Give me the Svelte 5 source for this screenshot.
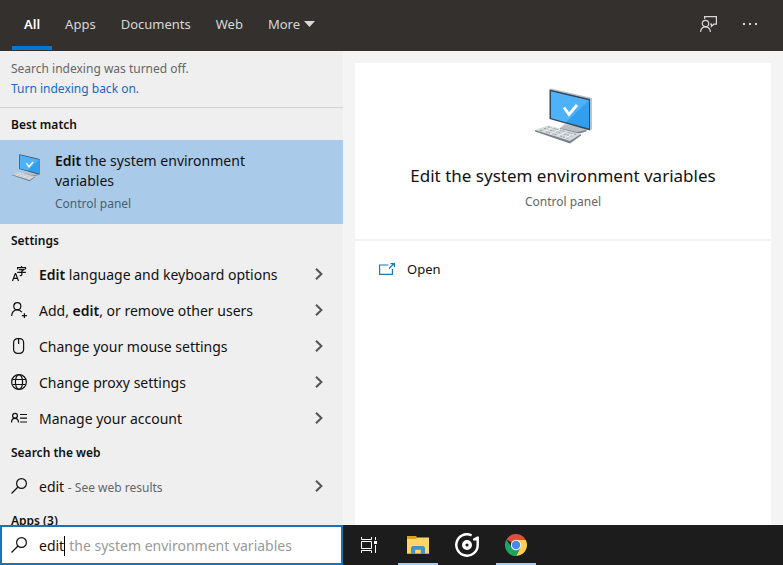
<script>
  const tabs = ['All', 'Apps', 'Documents', 'Web'];
  let active = $state('All');
  let query = $state('edit');

  const settings = [
    { icon: 'language', parts: [['Edit', true], [' language and keyboard options', false]] },
    { icon: 'user', parts: [['Add, ', false], ['edit', true], [', or remove other users', false]] },
    { icon: 'mouse', parts: [['Change your mouse settings', false]] },
    { icon: 'globe', parts: [['Change proxy settings', false]] },
    { icon: 'account', parts: [['Manage your account', false]] }
  ];
</script>

{#snippet computer(size)}
  <svg width={size} height={size} viewBox="0 0 60 60" aria-hidden="true">
    <path d="M27 41l5-4 12 2.500V35l4 1v4.500l6 1.500-1 2.500-9 2z" fill="#b9bfc4" />
    <path d="M27 41l17 4 9.500-2v1.500l-9.500 2.500-17-4.500z" fill="#7d868c" />
    <path d="M16.500 2.500l2-1L59 11v31.500l-2 1z" fill="#bcc3c8" />
    <path d="M16.500 2.500L57 12v31.500L16.500 32z" fill="#34495a" />
    <path d="M18 4.500L56 13.500v28L18 31z" fill="#319ff0" />
    <path d="M18 4.500L56 13.500 33 35.200 18 31z" fill="#4fb2f9" />
    <path d="M31 20.500l5 7L44 18" fill="none" stroke="#fff" stroke-width="2.800" />
    <path d="M2 43l13-4.500 33 8.500-11 8z" fill="#d3d8db" />
    <path d="M2 43l35 11 11-7v1.500L37 56.500 2 44.500z" fill="#77818a" />
    <path d="M7 43l29 8.700M11 41.400l29 8M15 40l28 7.500" fill="none" stroke="#98a1a7" stroke-width="1" stroke-dasharray="2 1" />
    <path d="M10 45l10-4.500M17 47l10-4.500M24 49l10-4.500M31 51.500l9-4.500" stroke="#f1f3f4" stroke-width="1" />
  </svg>
{/snippet}

{#snippet magnifier()}
  <svg width="16" height="16" viewBox="0 0 16 16" class="line" aria-hidden="true">
    <circle cx="10.500" cy="5.500" r="4.900" />
    <path d="M7 9L.5 15.500" />
  </svg>
{/snippet}

{#snippet chevron()}
  <svg width="8" height="12" viewBox="0 0 8 12" aria-hidden="true">
    <path d="M1 .8L6.400 6 1 11.200" fill="none" stroke="#555" stroke-width="2" />
  </svg>
{/snippet}

{#snippet glyph(name)}
  <svg width="16" height="16" viewBox="0 0 16 16" class="line" aria-hidden="true">
    {#if name === 'language'}
      <path d="M1.500 15L4.300 7.500h.4L7.500 15M2.600 12.400h3.900" />
      <path d="M10.500 0v1.600M6.600 3.600V1.700h7.900v1.900M8 3.600h4.800l-2 1.700v3.500q0 1-2 .8M6.200 6.400h8.600" />
    {:else if name === 'user'}
      <circle cx="6.300" cy="4.200" r="3.500" />
      <path d="M.6 14C.9 10 3 7.800 6.300 7.800c2 0 3.500.9 4.500 2.400M13.400 11.200v5M10.900 13.700h5" />
    {:else if name === 'mouse'}
      <rect x="2.600" y=".6" width="10" height="14.800" rx="4" />
      <path d="M7.600.6V6" />
    {:else if name === 'globe'}
      <circle cx="8" cy="8" r="7.400" />
      <ellipse cx="8" cy="8" rx="3.600" ry="7.400" />
      <path d="M1.400 5.500h13.200M1.400 10.500h13.200" />
    {:else}
      <circle cx="4" cy="5.800" r="2.400" />
      <path d="M.5 12.500c0-2.600 1.300-4.200 3.500-4.200s3.500 1.600 3.500 4.200M9 4.500h7M9 8.200h7M9 12h7" />
    {/if}
  </svg>
{/snippet}

<div class="screen">
  <header>
    <nav aria-label="Search filters">
      {#each tabs as tab}
        <button class="tab" class:active={active === tab} onclick={() => (active = tab)}>{tab}</button>
      {/each}
      <button class="tab more">
        More
        <svg width="11" height="6" viewBox="0 0 11 6" aria-hidden="true"><path d="M0 0h11L5.500 6z" fill="currentColor" /></svg>
      </button>
    </nav>
    <div class="tools">
      <button aria-label="Feedback">
        <svg width="17" height="17" viewBox="0 0 17 17" fill="none" stroke="currentColor" stroke-width="1.200" aria-hidden="true">
          <circle cx="5.500" cy="7.500" r="3.200" />
          <path d="M.6 16c.2-3.200 2-5.200 4.900-5.200s4.700 2 4.900 5.200M4.600 3V.6h11.800v7.600h-2.600l-2.400 2.200V8.200h-1.200" />
        </svg>
      </button>
      <button aria-label="Options">
        <svg width="16" height="4" viewBox="0 0 16 4" fill="currentColor" aria-hidden="true"><path d="M1 1h2v2H1zM7 1h2v2H7zM13 1h2v2h-2z" /></svg>
      </button>
    </div>
  </header>

  <main>
    <section class="results" aria-label="Results">
      <div class="notice">
        <p>Search indexing was turned off.</p>
        <a href="#indexing">Turn indexing back on.</a>
      </div>

      <h2>Best match</h2>
      <button class="best">
        {@render computer(30)}
        <span class="best-text">
          <span><b>Edit</b> the system environment variables</span>
          <span class="kind">Control panel</span>
        </span>
      </button>

      <h2>Settings</h2>
      {#each settings as item}
        <button class="row">
          {@render glyph(item.icon)}
          <span class="label">{#each item.parts as [text, strong]}{#if strong}<b>{text}</b>{:else}{text}{/if}{/each}</span>
          {@render chevron()}
        </button>
      {/each}

      <h2>Search the web</h2>
      <button class="row">
        {@render magnifier()}
        <span class="label">edit <small>- See web results</small></span>
        {@render chevron()}
      </button>

      <h2>Apps (3)</h2>
    </section>

    <section class="preview" aria-label="Preview">
      <div class="card">
        <div class="hero">
          {@render computer(60)}
          <h1>Edit the system environment variables</h1>
          <p>Control panel</p>
        </div>
        <button class="open">
          <svg width="16" height="12" viewBox="0 0 16 12" fill="none" stroke="#1979b8" stroke-width="1.200" aria-hidden="true">
            <path d="M9.500 2H.6v9.400h12.800V6M10 5.500L15 .8M11.500.6h3.900v3.700" />
          </svg>
          Open
        </button>
      </div>
    </section>
  </main>

  <footer>
    <label class="search">
      {@render magnifier()}
      <span class="typed">
        <input type="text" aria-label="Search" size="1" autocomplete="off" spellcheck="false" bind:value={query} />
        <span class="ghost">the system environment variables</span>
      </span>
    </label>
    <div class="taskbar">
      <button aria-label="Task view">
        <svg width="18" height="16" viewBox="0 0 18 16" fill="none" stroke="#fff" stroke-width="1" aria-hidden="true">
          <path d="M1.500 0v2.500h10V0M1.500 16v-2.500h10V16M1.500 4.500h10v7h-10zM15.500 0v3M15.500 8v8" />
          <path d="M14 4h3v3h-3z" fill="#fff" stroke="none" />
        </svg>
      </button>
      <button class="running" aria-label="File Explorer">
        <svg width="22" height="18" viewBox="0 0 22 18" aria-hidden="true">
          <path d="M0 0h9l1.500 2H22v16H0z" fill="#e0a01c" />
          <path d="M0 3h9l1.500-1.500H22V17H0z" fill="#fcd66b" />
          <path d="M4 18v-6.500L5.500 10h11l1.500 1.500V18h-4.200v-4.300H8.200V18z" fill="#3d94cf" />
        </svg>
      </button>
      <button aria-label="Groove Music">
        <svg width="24" height="24" viewBox="0 0 24 24" fill="none" stroke="#fff" aria-hidden="true">
          <path d="M16.600 2.300A10.700 10.700 0 1 0 22.700 12V5.500" stroke-width="2.500" />
          <path d="M22.700 7.500H18V5.800l4-2.300h1.900v3z" fill="#fff" stroke="none" />
          <circle cx="12" cy="12" r="3.300" stroke-width="3.400" />
        </svg>
      </button>
      <button class="running" aria-label="Google Chrome">
        <svg width="22" height="22" viewBox="0 0 22 22" aria-hidden="true">
          <path d="M11 11L1.470 5.500A11 11 0 0 1 20.530 5.500z" fill="#dd4f43" />
          <path d="M11 11V6h9.800A11 11 0 0 1 11 22l4.300-8.500z" fill="#fdd04d" />
          <path d="M11 11l4.300 2.500L11 22A11 11 0 0 1 1.470 5.500L6.700 13.500z" fill="#1da362" />
          <circle cx="11" cy="11" r="5.200" fill="#f5f5f5" />
          <circle cx="11" cy="11" r="4.200" fill="#4688f1" />
        </svg>
      </button>
    </div>
  </footer>
</div>

<style>
  :global(body) {
    margin: 0;
  }

  .screen {
    height: 100vh;
    display: flex;
    flex-direction: column;
    background: #f4f4f4;
    color: #111;
    font: 14px/20px 'Noto Sans', 'Open Sans', sans-serif;
  }

  button {
    border: 0;
    margin: 0;
    padding: 0;
    background: none;
    color: inherit;
    font: inherit;
    text-align: left;
  }

  svg {
    flex: none;
    display: block;
  }

  b {
    font-weight: 600;
  }

  p,
  h1,
  h2 {
    margin: 0;
  }

  .line {
    fill: none;
    stroke: #111;
    stroke-width: 1.2;
  }

  header {
    flex: none;
    height: 51px;
    display: flex;
    justify-content: space-between;
    padding: 0 12px;
    background: #33302d;
    color: #d9d8d7;
    font-size: 13px;
  }

  nav,
  .tools {
    display: flex;
  }

  nav {
    gap: 1px;
  }

  .tab {
    padding: 0 12px;
    border: solid transparent;
    border-width: 2px 0 4px;
    margin-bottom: 1px;
  }

  .tab.active {
    border-bottom-color: #0078d7;
    color: #fff;
    font-weight: 600;
  }

  .more {
    display: flex;
    align-items: center;
    gap: 4px;
  }

  .tools button {
    width: 42px;
    display: flex;
    align-items: center;
    justify-content: center;
    padding-bottom: 3px;
  }

  main {
    flex: 1;
    min-height: 0;
    display: flex;
  }

  .results {
    flex: none;
    width: 343px;
    overflow: hidden;
    background: #efefef;
  }

  .notice {
    padding: 8px 11px;
    border-bottom: 1px solid #d2d2d2;
    color: #666;
    font-size: 12px;
  }

  .notice a {
    display: block;
    color: #1569c0;
    text-decoration: none;
  }

  h2 {
    padding: 2px 11px 0;
    font-size: 12px;
    line-height: 30px;
    font-weight: 600;
  }

  .best {
    width: 100%;
    display: flex;
    gap: 14px;
    padding: 11px 80px 10px 11px;
    background: #a9cbe9;
  }

  .best svg {
    margin-top: 2px;
  }

  .best-text {
    display: flex;
    flex-direction: column;
    gap: 3px;
  }

  .kind {
    color: #49606f;
    font-size: 12px;
  }

  .row {
    width: 100%;
    height: 36px;
    display: flex;
    align-items: center;
    gap: 12px;
    padding: 0 20px 0 11px;
  }

  .label {
    flex: 1;
    padding-top: 2px;
    white-space: nowrap;
  }

  small {
    color: #666;
    font-size: 12px;
  }

  .preview {
    flex: 1;
    display: flex;
    padding: 12px 12px 0;
  }

  .card {
    flex: 1;
    background: #fff;
  }

  .hero {
    display: flex;
    flex-direction: column;
    align-items: center;
    padding: 24px 12px 27px;
    border-bottom: 2px solid #f1f1f1;
  }

  .hero h1 {
    padding: 17px 0 4px;
    font-size: 17px;
    line-height: 24px;
    font-weight: 400;
  }

  .hero p {
    color: #666;
    font-size: 12px;
  }

  .open {
    width: 100%;
    display: flex;
    align-items: center;
    gap: 12px;
    padding: 18px 24px;
    font-size: 13px;
  }

  footer {
    flex: none;
    height: 40px;
    display: flex;
    background: #1c1c1c;
  }

  .search {
    box-sizing: border-box;
    width: 343px;
    display: flex;
    align-items: center;
    gap: 12px;
    padding: 0 9px;
    border: 2px solid #1a72b8;
    background: #fff;
  }

  .typed {
    display: flex;
    align-items: center;
    padding-top: 2px;
    white-space: nowrap;
  }

  input {
    field-sizing: content;
    border: 0;
    padding: 0;
    outline: 0;
    background: none;
    color: #111;
    font: inherit;
  }

  .ghost {
    padding-left: 4px;
    border-left: 1px solid #000;
    color: #999;
  }

  .taskbar {
    display: flex;
    gap: 1px;
    padding-left: 1px;
  }

  .taskbar button {
    width: 48px;
    display: flex;
    align-items: center;
    justify-content: center;
  }

  .taskbar button:first-child {
    width: 49px;
  }

  .taskbar .running {
    background: linear-gradient(#a5cbf0, #a5cbf0) bottom / 40px 2px no-repeat;
  }
</style>
